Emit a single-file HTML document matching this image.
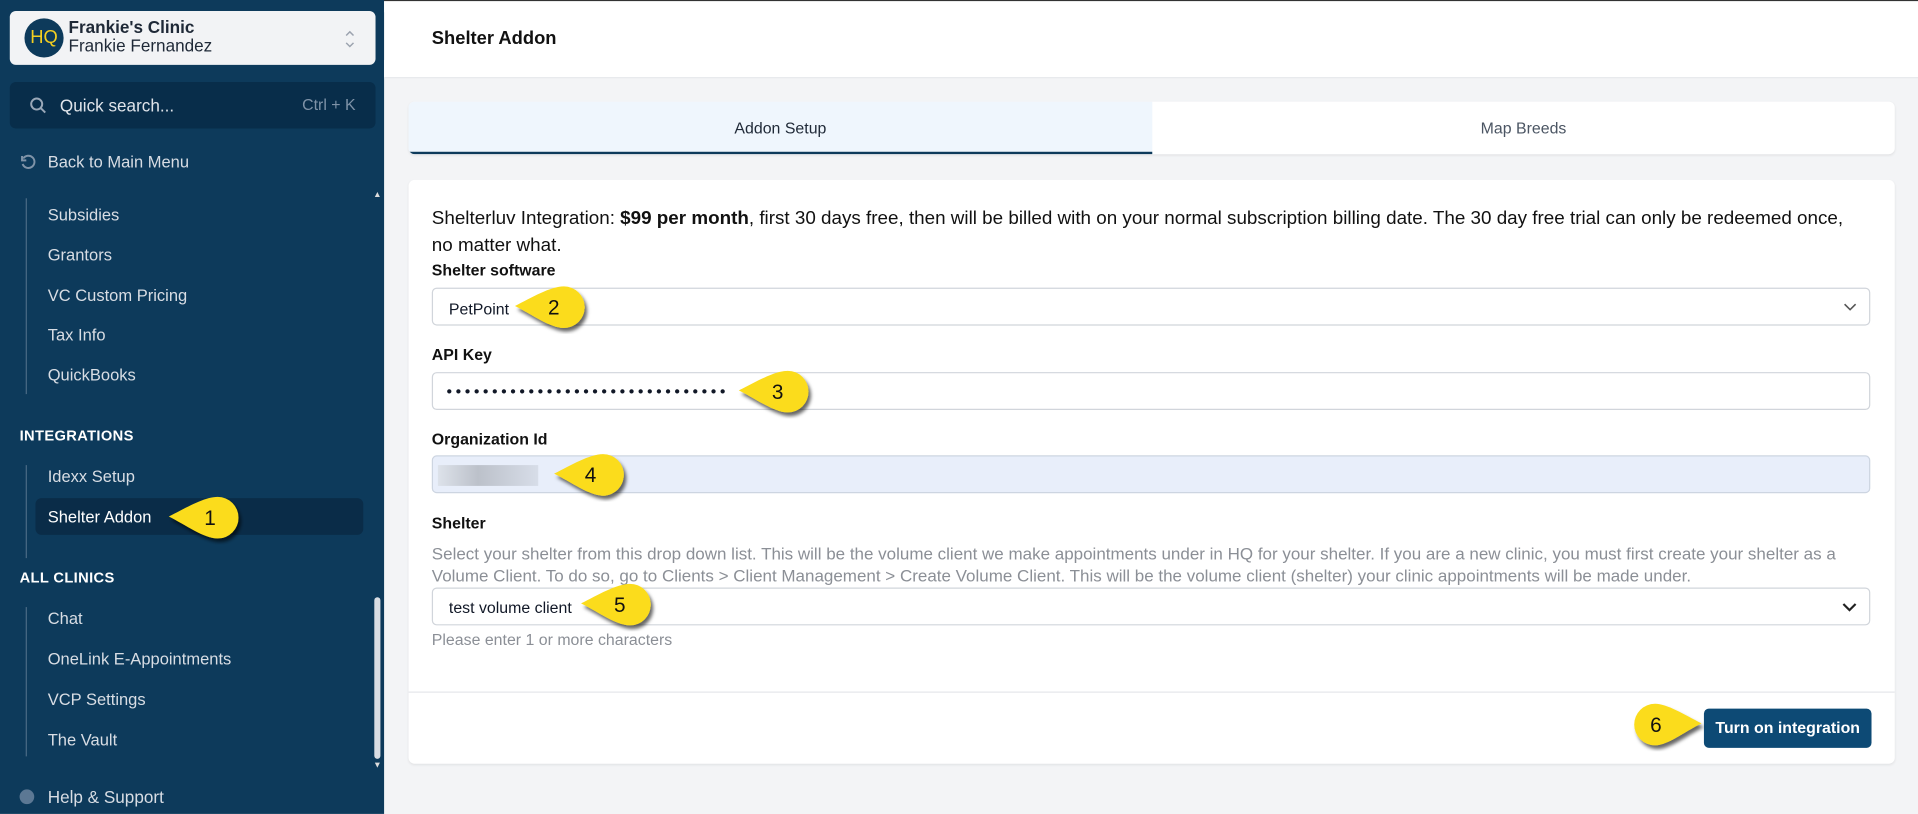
<!DOCTYPE html>
<html><head><meta charset="utf-8"><style>
html,body{margin:0;padding:0;width:1918px;height:798px;overflow:hidden;background:#f3f4f6}
#s{position:absolute;left:0;top:0;width:1568px;height:652px;transform:scale(1.22321,1.22393);transform-origin:0 0;font-family:"Liberation Sans",sans-serif;color:#111827}
.abs{position:absolute}
.sb{left:0;top:0;width:314px;height:665px;background:#0d3a5b;color:#e5e7eb}
.item{position:absolute;left:39px;font-size:13.5px;color:#d8dde4}
.sec{position:absolute;left:16px;font-size:12px;font-weight:bold;color:#fff;letter-spacing:.3px}
.vl{position:absolute;left:21px;width:1px;background:#4a6a85}
.lbl{position:absolute;left:353px;font-size:13px;font-weight:bold;color:#111}
.inp{position:absolute;left:353px;width:1176px;height:31px;border:1px solid #d1d5db;border-radius:4px;background:#fff;box-sizing:border-box;font-size:13px}
.co{position:absolute;width:66px;height:40px}
</style></head><body><div id="s">
<div class="abs" style="left:0;top:0;width:1568px;height:1px;background:#333"></div>
<div class="abs sb">
 <div class="abs" style="left:8px;top:9px;width:299px;height:44px;background:#f2f3f5;border-radius:5px"></div>
 <div class="abs" style="left:20px;top:15px;width:32px;height:32px;border-radius:50%;background:#0d3a5b;color:#f5d020;font-size:15px;text-align:center;line-height:32px">HQ</div>
 <div class="abs" style="left:56px;top:14px;font-size:14px;font-weight:bold;color:#1f2937">Frankie's Clinic</div>
 <div class="abs" style="left:56px;top:29px;font-size:14px;color:#1f2937">Frankie Fernandez</div>
 <svg class="abs" style="left:281px;top:24px" width="10" height="16" viewBox="0 0 10 16"><path d="M2 5L5 2L8 5M2 11L5 14L8 11" stroke="#9ca3af" stroke-width="1.2" fill="none"/></svg>
 <div class="abs" style="left:8px;top:67px;width:299px;height:38px;background:#082d4a;border-radius:5px"></div>
 <svg class="abs" style="left:24px;top:79px" width="14" height="14" viewBox="0 0 14 14"><circle cx="6" cy="6" r="4.5" stroke="#9aa8b8" stroke-width="1.6" fill="none"/><path d="M9.5 9.5L13 13" stroke="#9aa8b8" stroke-width="1.6"/></svg>
 <div class="abs" style="left:49px;top:78px;font-size:14px;color:#dfe4ea">Quick search...</div>
 <div class="abs" style="left:247px;top:78px;font-size:13px;color:#7f93a8">Ctrl + K</div>
 <svg class="abs" style="left:16px;top:126px" width="14" height="14" viewBox="0 0 14 14"><path d="M3 3.5A5 5 0 1 1 2.5 8" stroke="#7f93a8" stroke-width="1.6" fill="none"/><path d="M2 1.5V5H5.5" stroke="#7f93a8" stroke-width="1.6" fill="none"/></svg>
 <div class="abs" style="left:39px;top:125px;font-size:13.5px;color:#d8dde4">Back to Main Menu</div>
 <div class="vl" style="top:162px;height:160px"></div>
 <div class="item" style="top:168px">Subsidies</div>
 <div class="item" style="top:201px">Grantors</div>
 <div class="item" style="top:234px">VC Custom Pricing</div>
 <div class="item" style="top:266px">Tax Info</div>
 <div class="item" style="top:299px">QuickBooks</div>
 <div class="sec" style="top:349px">INTEGRATIONS</div>
 <div class="vl" style="top:380px;height:76px"></div>
 <div class="item" style="top:382px">Idexx Setup</div>
 <div class="abs" style="left:29px;top:407px;width:268px;height:30px;background:#0a2c48;border-radius:5px"></div>
 <div class="item" style="top:415px;color:#fff">Shelter Addon</div>
 <div class="sec" style="top:465px">ALL CLINICS</div>
 <div class="vl" style="top:496px;height:122px"></div>
 <div class="item" style="top:498px">Chat</div>
 <div class="item" style="top:531px">OneLink E-Appointments</div>
 <div class="item" style="top:564px">VCP Settings</div>
 <div class="item" style="top:597px">The Vault</div>
 <div class="abs" style="left:306px;top:488px;width:5px;height:132px;background:#d9dde3;border-radius:3px"></div>
 <div class="abs" style="left:305px;top:156px;font-size:7px;color:#ddd">▲</div>
 <div class="abs" style="left:305px;top:622px;font-size:7px;color:#ddd">▼</div>
 <div class="abs" style="left:16px;top:645px;width:12px;height:12px;border-radius:50%;background:#5c7894"></div>
 <div class="abs" style="left:39px;top:643px;font-size:14px;color:#d8dde4">Help &amp; Support</div>
</div>
<div class="abs" style="left:314px;top:10px;width:15px;height:39px;background:#0d3a5b"></div>
<svg class="abs" style="left:316px;top:23px" width="10" height="12" viewBox="0 0 10 12"><path d="M7 1L2 6L7 11" stroke="#fff" stroke-width="2" fill="none"/></svg>
<div class="abs" style="left:314px;top:1px;width:1254px;height:62px;background:#fff;border-bottom:1px solid #e5e7eb"></div>
<div class="abs" style="left:353px;top:23px;font-size:15px;font-weight:bold;color:#111">Shelter Addon</div>
<div class="abs" style="left:334px;top:83px;width:1215px;height:43px;background:#fff;border-radius:5px;box-shadow:0 1px 2px rgba(0,0,0,.08);overflow:hidden">
 <div class="abs" style="left:0;top:0;width:608px;height:41px;background:#eff6fd;border-bottom:2px solid #0d3a5b"></div>
 <div class="abs" style="left:0;top:14px;width:608px;text-align:center;font-size:13px;color:#1f2937">Addon Setup</div>
 <div class="abs" style="left:608px;top:14px;width:607px;text-align:center;font-size:13px;color:#4b5563">Map Breeds</div>
</div>
<div class="abs" style="left:334px;top:147px;width:1215px;height:477px;background:#fff;border-radius:5px;box-shadow:0 1px 2px rgba(0,0,0,.08)"></div>
<div class="abs" style="left:353px;top:168px;width:1190px;font-size:15.4px;line-height:22px;color:#111;white-space:nowrap">Shelterluv Integration: <b>$99 per month</b>, first 30 days free, then will be billed with on your normal subscription billing date. The 30 day free trial can only be redeemed once,<br>no matter what.</div>
<div class="lbl" style="top:213px">Shelter software</div>
<div class="inp" style="top:235px"><span class="abs" style="left:13px;top:9px">PetPoint</span><svg class="abs" style="left:1153px;top:11px" width="11" height="8" viewBox="0 0 11 8"><path d="M1 1.5L5.5 6L10 1.5" stroke="#555" stroke-width="1.3" fill="none"/></svg></div>
<div class="lbl" style="top:282px">API Key</div>
<div class="inp" style="top:304px"><span class="abs" style="left:11px;top:7px;font-size:13px;letter-spacing:2.9px">•••••••••••••••••••••••••••••••</span></div>
<div class="lbl" style="top:351px">Organization Id</div>
<div class="inp" style="top:372px;background:#e8eefa;border-color:#cdd5e1"><div class="abs" style="left:4px;top:7px;width:82px;height:17px;background:linear-gradient(90deg,#dde2ea,#bcc1ca 40%,#d7dde8)"></div></div>
<div class="lbl" style="top:420px">Shelter</div>
<div class="abs" style="left:353px;top:443px;width:1190px;font-size:13.9px;line-height:18px;color:#8b8f96;white-space:nowrap">Select your shelter from this drop down list. This will be the volume client we make appointments under in HQ for your shelter. If you are a new clinic, you must first create your shelter as a<br>Volume Client. To do so, go to Clients &gt; Client Management &gt; Create Volume Client. This will be the volume client (shelter) your clinic appointments will be made under.</div>
<div class="inp" style="top:480px"><span class="abs" style="left:13px;top:8px">test volume client</span><svg class="abs" style="left:1152px;top:11px" width="12" height="8" viewBox="0 0 12 8"><path d="M1 1.5L6 6.5L11 1.5" stroke="#222" stroke-width="1.8" fill="none"/></svg></div>
<div class="abs" style="left:353px;top:515px;font-size:13px;color:#8b8f96">Please enter 1 or more characters</div>
<div class="abs" style="left:334px;top:565px;width:1215px;height:1px;background:#e5e7eb"></div>
<div class="abs" style="left:1393px;top:579px;width:137px;height:32px;background:#0d4a75;border-radius:4px;color:#fff;font-size:13px;font-weight:bold;text-align:center;line-height:32px">Turn on integration</div>
<svg width="0" height="0" style="position:absolute"><defs><filter id="sh" x="-20%" y="-20%" width="150%" height="160%"><feDropShadow dx="2" dy="3" stdDeviation="1.5" flood-color="#000" flood-opacity=".6"/></filter></defs></svg>
<svg class="co" style="left:137px;top:405px" viewBox="0 0 66 40"><path d="M1 17C15 10 30 1 41 1A17 17 0 0 1 41 35C30 35 15 24 1 17Z" fill="#fbdc1a" filter="url(#sh)"/><text x="30" y="24" font-size="17" font-family="Liberation Sans" fill="#111">1</text></svg>
<svg class="co" style="left:420px;top:233px" viewBox="0 0 66 40"><path d="M1 17C15 10 30 1 41 1A17 17 0 0 1 41 35C30 35 15 24 1 17Z" fill="#fbdc1a" filter="url(#sh)"/><text x="28" y="24" font-size="17" font-family="Liberation Sans" fill="#111">2</text></svg>
<svg class="co" style="left:603px;top:302px" viewBox="0 0 66 40"><path d="M1 17C15 10 30 1 41 1A17 17 0 0 1 41 35C30 35 15 24 1 17Z" fill="#fbdc1a" filter="url(#sh)"/><text x="28" y="24" font-size="17" font-family="Liberation Sans" fill="#111">3</text></svg>
<svg class="co" style="left:452px;top:370px" viewBox="0 0 66 40"><path d="M1 17C15 10 30 1 41 1A17 17 0 0 1 41 35C30 35 15 24 1 17Z" fill="#fbdc1a" filter="url(#sh)"/><text x="26" y="24" font-size="17" font-family="Liberation Sans" fill="#111">4</text></svg>
<svg class="co" style="left:474px;top:476px" viewBox="0 0 66 40"><path d="M1 17C15 10 30 1 41 1A17 17 0 0 1 41 35C30 35 15 24 1 17Z" fill="#fbdc1a" filter="url(#sh)"/><text x="28" y="24" font-size="17" font-family="Liberation Sans" fill="#111">5</text></svg>
<svg class="abs" style="left:1333px;top:574px" width="66" height="40" viewBox="0 0 66 40"><path d="M58 17C44 10 30 1 20 1A17 17 0 0 0 20 35C30 35 44 24 58 17Z" fill="#fbdc1a" filter="url(#sh)"/><text x="16" y="24" font-size="17" font-family="Liberation Sans" fill="#111">6</text></svg>
</div></body></html>
